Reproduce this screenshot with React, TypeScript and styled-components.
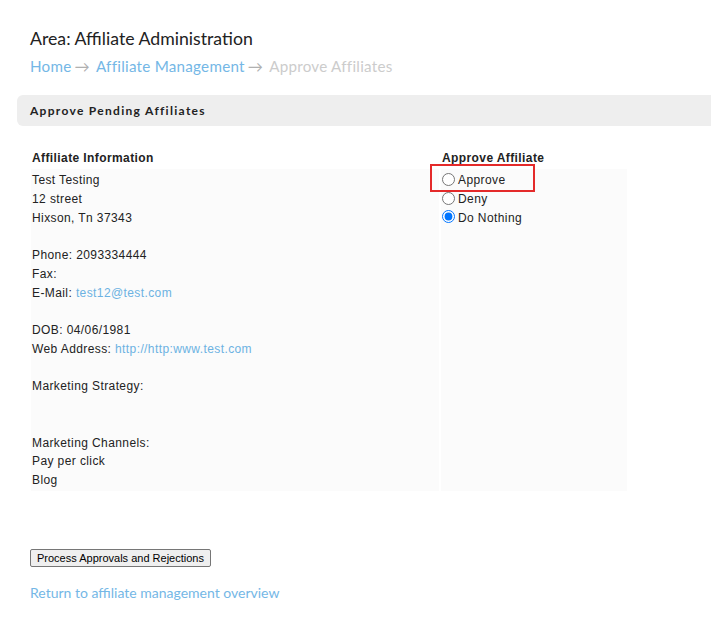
import React from "react";
import styled, { createGlobalStyle } from "styled-components";

const Global = createGlobalStyle`
  html, body { margin: 0; padding: 0; background: #fff; }
  body { font-family: Lato, "Liberation Sans", Arial, sans-serif; color: #222; }
`;

const Page = styled.div`
  padding: 0 0 0 17px;
  overflow: hidden;
`;

const Inner = styled.div`
  padding-left: 13px;
`;

const Title = styled.h1`
  margin: 28px 0 0;
  font-family: Lato, sans-serif;
  font-weight: 400;
  font-size: 17.7px;
  line-height: 22px;
  color: #222;
`;

const Crumbs = styled.nav`
  margin-top: 6px;
  font-family: Lato, sans-serif;
  font-size: 15.2px;
  line-height: 20px;
  display: flex;
  align-items: center;
  gap: 3px;
  letter-spacing: 0.25px;
`;

const Crumb = styled.a<{ $current?: boolean }>`
  color: ${(p) => (p.$current ? "#cccccc" : "#74b7e6")};
  text-decoration: none;
`;

const Arrow = styled.span`
  color: #b0b0b0;
  margin: 0 3px 0 0;
`;

const PanelHeader = styled.div`
  margin-top: 19px;
  height: 31px;
  background: #eeeeee;
  border-radius: 6px 0 0 6px;
  padding-left: 13px;
  display: flex;
  align-items: center;
  font-family: Lato, sans-serif;
  font-weight: 700;
  font-size: 12px;
  letter-spacing: 1.3px;
  color: #222;
`;

const Table = styled.div`
  margin-top: 22px;
  display: grid;
  grid-template-columns: 408px 186px;
  column-gap: 2px;
  margin-left: 1px;
  font-family: "Liberation Sans", Arial, sans-serif;
  font-size: 12px;
  letter-spacing: 0.4px;
  color: #222;
`;

const HeadCell = styled.div`
  font-weight: 700;
  line-height: 21px;
  padding-left: 1px;
`;

const Cell = styled.div`
  background: #fbfbfb;
  line-height: 18.75px;
  padding: 2px 0 1px 1px;
  min-height: 318px;
  position: relative;
`;

const Line = styled.div`
  min-height: 18.75px;
  white-space: nowrap;
`;

const Link = styled.a`
  color: #6cb2e2;
  text-decoration: none;
`;

const RadioRow = styled.label`
  display: flex;
  align-items: center;
  height: 18.75px;
`;

const Radio = styled.input`
  margin: 0 3px 0 0;
  width: 13px;
  height: 13px;
  position: relative;
  top: -1px;
`;

const Highlight = styled.div`
  position: absolute;
  left: -11px;
  top: -5px;
  width: 101px;
  height: 24px;
  border: 2px solid #e42a2a;
  pointer-events: none;
`;

const Button = styled.button`
  margin-top: 58px;
  font-family: "Liberation Sans", Arial, sans-serif;
  font-size: 11px;
  line-height: 14px;
  height: 18px;
  padding: 0 6px;
  color: #000;
  background: #efefef;
  border: 1px solid #767676;
  border-radius: 2px;
  display: block;
`;

const Back = styled.a`
  display: block;
  margin-top: 16px;
  font-family: Lato, sans-serif;
  font-size: 14px;
  line-height: 20px;
  color: #74b7e6;
  text-decoration: none;
`;

const info: React.ReactNode[] = [
  "Test Testing",
  "12 street",
  "Hixson, Tn 37343",
  "",
  "Phone: 2093334444",
  "Fax:",
  <>E-Mail: <Link href="#">test12@test.com</Link></>,
  "",
  "DOB: 04/06/1981",
  <>Web Address: <Link href="#">http://http:www.test.com</Link></>,
  "",
  "Marketing Strategy:",
  "",
  "",
  "Marketing Channels:",
  "Pay per click",
  "Blog",
];

export default function App() {
  return (
    <>
      <Global />
      <Page>
        <Inner>
          <Title>Area: Affiliate Administration</Title>
          <Crumbs>
            <Crumb href="#">Home</Crumb>
            <Arrow>→</Arrow>
            <Crumb href="#">Affiliate Management</Crumb>
            <Arrow>→</Arrow>
            <Crumb $current>Approve Affiliates</Crumb>
          </Crumbs>
        </Inner>
        <PanelHeader>Approve Pending Affiliates</PanelHeader>
        <Inner>
          <Table>
            <HeadCell>Affiliate Information</HeadCell>
            <HeadCell>Approve Affiliate</HeadCell>
            <Cell>
              {info.map((l, i) => (
                <Line key={i}>{l}</Line>
              ))}
            </Cell>
            <Cell>
              <Highlight />
              <RadioRow>
                <Radio type="radio" name="a1" />
                Approve
              </RadioRow>
              <RadioRow>
                <Radio type="radio" name="a1" />
                Deny
              </RadioRow>
              <RadioRow>
                <Radio type="radio" name="a1" defaultChecked />
                Do Nothing
              </RadioRow>
            </Cell>
          </Table>
          <Button>Process Approvals and Rejections</Button>
          <Back href="#">Return to affiliate management overview</Back>
        </Inner>
      </Page>
    </>
  );
}
